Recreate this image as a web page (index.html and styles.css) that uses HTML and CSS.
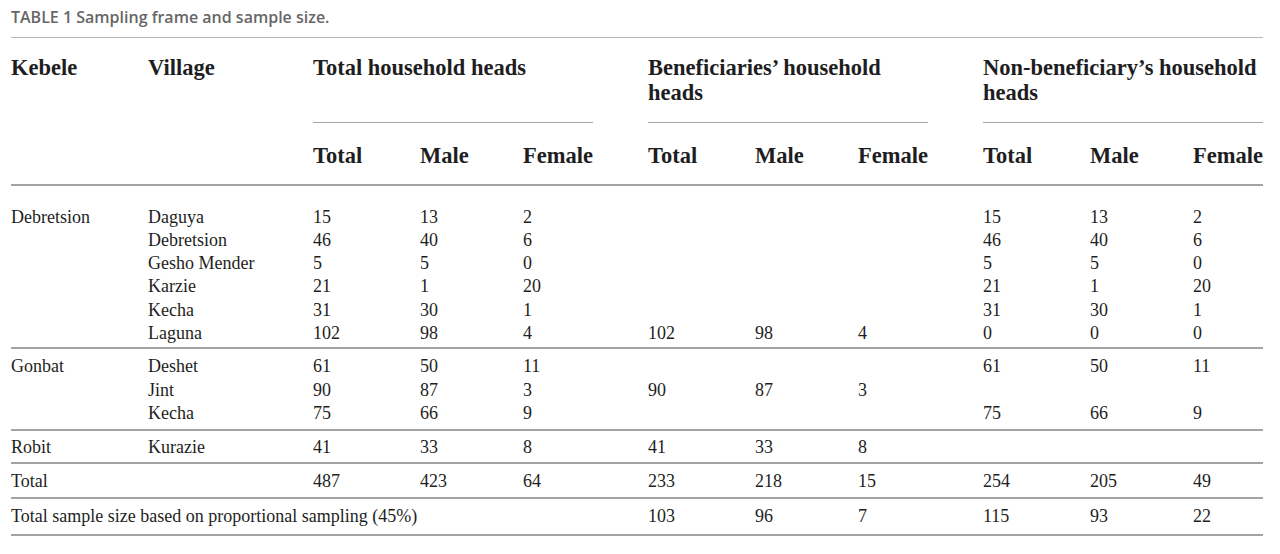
FILE: index.html
```html
<!DOCTYPE html>
<html lang="en">
<head>
<meta charset="utf-8">
<title>TABLE 1 Sampling frame and sample size.</title>
<link rel="stylesheet" href="styles.css">
</head>
<body>
<div class="page">
  <div class="caption">TABLE 1 Sampling frame and sample size.</div>
  <div class="table">
    <div class="thead grid">
      <div class="hcell span2r">Kebele</div>
      <div class="hcell span2r">Village</div>
      <div class="hcell grp">Total household heads</div>
      <div class="hcell grp g">Beneficiaries’ household heads</div>
      <div class="hcell grp g">Non-beneficiary’s household heads</div>
      <div class="hcell sub">Total</div>
      <div class="hcell sub">Male</div>
      <div class="hcell sub">Female</div>
      <div class="hcell sub g">Total</div>
      <div class="hcell sub">Male</div>
      <div class="hcell sub">Female</div>
      <div class="hcell sub g">Total</div>
      <div class="hcell sub">Male</div>
      <div class="hcell sub">Female</div>
    </div>

    <div class="tgroup first grid">
      <div class="r6">Debretsion</div>
      <div>Daguya</div><div>15</div><div>13</div><div>2</div><div class="g"></div><div></div><div></div><div class="g">15</div><div>13</div><div>2</div>
      <div>Debretsion</div><div>46</div><div>40</div><div>6</div><div class="g"></div><div></div><div></div><div class="g">46</div><div>40</div><div>6</div>
      <div>Gesho Mender</div><div>5</div><div>5</div><div>0</div><div class="g"></div><div></div><div></div><div class="g">5</div><div>5</div><div>0</div>
      <div>Karzie</div><div>21</div><div>1</div><div>20</div><div class="g"></div><div></div><div></div><div class="g">21</div><div>1</div><div>20</div>
      <div>Kecha</div><div>31</div><div>30</div><div>1</div><div class="g"></div><div></div><div></div><div class="g">31</div><div>30</div><div>1</div>
      <div>Laguna</div><div>102</div><div>98</div><div>4</div><div class="g">102</div><div>98</div><div>4</div><div class="g">0</div><div>0</div><div>0</div>
    </div>

    <div class="tgroup gonbat grid">
      <div class="r3">Gonbat</div>
      <div>Deshet</div><div>61</div><div>50</div><div>11</div><div class="g"></div><div></div><div></div><div class="g">61</div><div>50</div><div>11</div>
      <div>Jint</div><div>90</div><div>87</div><div>3</div><div class="g">90</div><div>87</div><div>3</div><div class="g"></div><div></div><div></div>
      <div>Kecha</div><div>75</div><div>66</div><div>9</div><div class="g"></div><div></div><div></div><div class="g">75</div><div>66</div><div>9</div>
    </div>

    <div class="tgroup robit grid">
      <div>Robit</div><div>Kurazie</div><div>41</div><div>33</div><div>8</div><div class="g">41</div><div>33</div><div>8</div><div class="g"></div><div></div><div></div>
    </div>

    <div class="tgroup total grid">
      <div>Total</div><div></div><div>487</div><div>423</div><div>64</div><div class="g">233</div><div>218</div><div>15</div><div class="g">254</div><div>205</div><div>49</div>
    </div>

    <div class="tgroup sample grid">
      <div class="span5">Total sample size based on proportional sampling (45%)</div><div class="g">103</div><div>96</div><div>7</div><div class="g">115</div><div>93</div><div>22</div>
    </div>
  </div>
</div>
</body>
</html>
```

FILE: styles.css
```css
html, body {
  margin: 0;
  padding: 0;
  background: #ffffff;
}

.page {
  width: 1252px;
  padding-left: 11px;
}

.caption {
  height: 37px;
  box-sizing: border-box;
  padding-top: 6px;
  font-family: "Open Sans", "Noto Sans", sans-serif;
  font-weight: 600;
  font-size: 16px;
  line-height: 22px;
  color: #666666;
}

.table {
  border-top: 1.5px solid #b8b8b8;
  font-family: "Liberation Serif", "Times New Roman", serif;
  color: #1e1e22;
}

.grid {
  display: grid;
  grid-template-columns: 137px 165px 107px 103px 70px 162px 103px 70px 162px 103px 70px;
}

.thead {
  border-bottom: 2px solid #a4a4a4;
  font-weight: bold;
  font-size: 22.5px;
  line-height: 25px;
}

.hcell {
  padding-top: 17px;
}

.span2r {
  grid-row: span 2;
}

.grp {
  grid-column: span 3;
  padding-bottom: 17px;
  border-bottom: 1.5px solid #a8a8a8;
}

.grp.g {
  margin-left: 55px;
  padding-left: 0;
}

.sub {
  padding-top: 19.5px;
  padding-bottom: 16.5px;
}

.g {
  padding-left: 55px;
}

.tgroup {
  font-size: 18px;
  line-height: 23.3px;
  border-bottom: 2px solid #a4a4a4;
  padding-top: 5.8px;
  padding-bottom: 3px;
}

.tgroup.first {
  padding-top: 19.5px;
  padding-bottom: 2px;
}

.tgroup.gonbat {
  padding-top: 6px;
  padding-bottom: 4px;
}

.tgroup.robit {
  padding-top: 5px;
  padding-bottom: 3px;
}

.tgroup.sample {
  padding-top: 6.2px;
  padding-bottom: 6px;
}

.r6 {
  grid-row: span 6;
}

.r3 {
  grid-row: span 3;
}

.span5 {
  grid-column: span 5;
  white-space: nowrap;
}
```
